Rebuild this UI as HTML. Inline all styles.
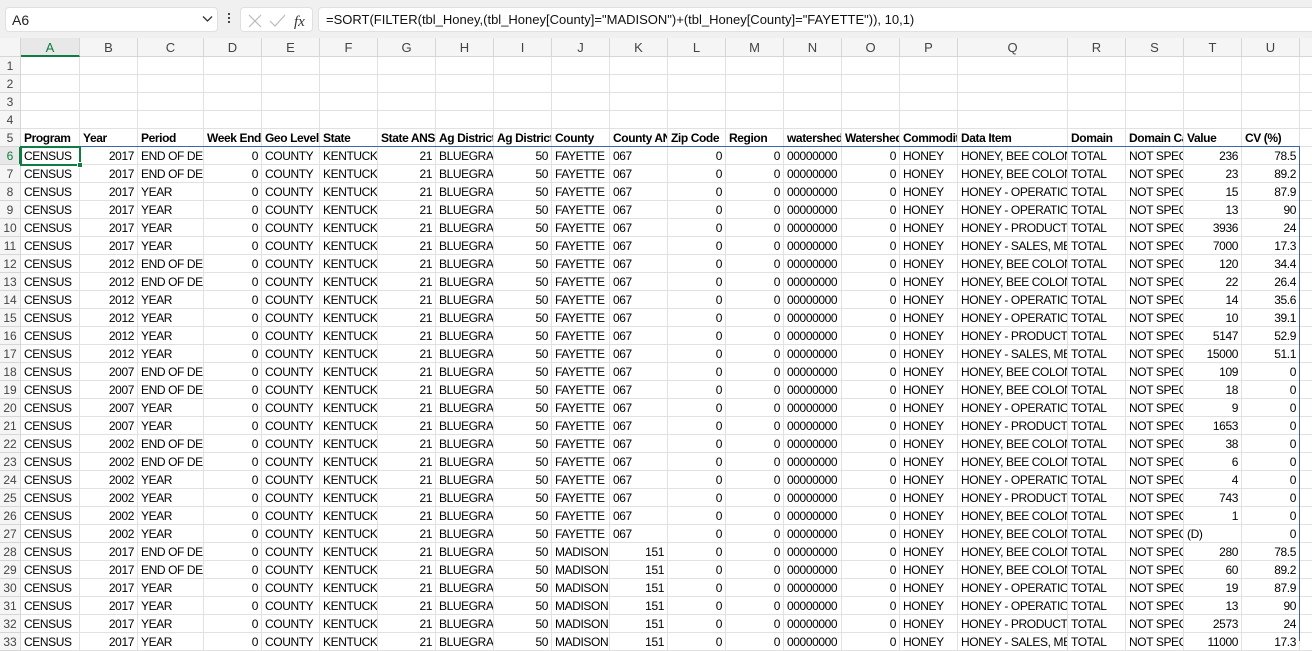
<!DOCTYPE html>
<html><head><meta charset="utf-8"><style>
*{box-sizing:border-box;margin:0;padding:0}
body{width:1312px;height:641px;overflow:hidden;background:#fff;font-family:"Liberation Sans",Arial,sans-serif;position:relative}
.top{position:absolute;left:0;top:0;width:1312px;height:38px;background:#f0f0f0}
.nb{position:absolute;left:5px;top:7px;width:213px;height:25px;background:#fff;border:1px solid #e0e0e0;border-radius:4px;font-size:14px;padding:4px 0 0 6px;color:#222}
.fb{position:absolute;left:240px;top:7px;width:73px;height:25px;background:#fff;border:1px solid #e0e0e0;border-radius:4px}
.fm{position:absolute;left:318px;top:7px;width:1000px;height:25px;background:#fff;border:1px solid #e0e0e0;border-radius:4px;font-size:13px;padding:4px 0 0 7px;color:#111;white-space:nowrap}
.g{position:absolute;left:0;top:38px;display:grid;grid-template-columns:21px 59px 58px 66px 58px 58px 58px 58px 58px 58px 58px 58px 58px 58px 58px 58px 58px 110px 58px 58px 58px 58px 20px;grid-template-rows:19px repeat(33,18px)}
.g>span{border-right:1px solid #e1e1e1;border-bottom:1px solid #e1e1e1;overflow:hidden;white-space:nowrap;font-size:12px;letter-spacing:-0.4px;line-height:19px;padding:0 3px;color:#000}
.g>span.r{text-align:right}
.g>span.c{background:#f5f5f5;border-color:#d6d6d6;text-align:center;color:#444;font-size:13px;line-height:19px;letter-spacing:0}
.g>span.h{background:#f5f5f5;border-color:#d6d6d6;text-align:center;color:#444;padding:0;letter-spacing:0}
.g>span.b{font-weight:bold}
</style></head><body>
<div class="top">
<div class="nb">A6</div>
<svg style="position:absolute;left:202px;top:15px" width="11" height="8"><path d="M1 1.5L5.5 6L10 1.5" fill="none" stroke="#333" stroke-width="1.3"/></svg>
<div style="position:absolute;left:228px;top:13px;width:2px;height:2px;background:#444;box-shadow:0 4px 0 #444,0 8px 0 #444"></div>
<div class="fb">
<svg style="position:absolute;left:6px;top:5px" width="60" height="16"><path d="M2 2L14 14M14 2L2 14" stroke="#bbb" stroke-width="1.2" fill="none"/><path d="M23 8L28 13L38 2" stroke="#bbb" stroke-width="1.2" fill="none"/><text x="47" y="13" font-family="Liberation Serif" font-style="italic" font-size="15" fill="#333">fx</text></svg>
</div>
<div class="fm">=SORT(FILTER(tbl_Honey,(tbl_Honey[County]="MADISON")+(tbl_Honey[County]="FAYETTE")), 10,1)</div>
</div>
<div class="g">
<span class="c" style="background:#f5f5f5"></span><span class="c" style="color:#107c41;border-bottom:2px solid #107c41;background:#e8e8e8">A</span><span class="c">B</span><span class="c">C</span><span class="c">D</span><span class="c">E</span><span class="c">F</span><span class="c">G</span><span class="c">H</span><span class="c">I</span><span class="c">J</span><span class="c">K</span><span class="c">L</span><span class="c">M</span><span class="c">N</span><span class="c">O</span><span class="c">P</span><span class="c">Q</span><span class="c">R</span><span class="c">S</span><span class="c">T</span><span class="c">U</span><span class="c"></span>
<span class="h">1</span><span></span><span></span><span></span><span></span><span></span><span></span><span></span><span></span><span></span><span></span><span></span><span></span><span></span><span></span><span></span><span></span><span></span><span></span><span></span><span></span><span></span><span></span>
<span class="h">2</span><span></span><span></span><span></span><span></span><span></span><span></span><span></span><span></span><span></span><span></span><span></span><span></span><span></span><span></span><span></span><span></span><span></span><span></span><span></span><span></span><span></span><span></span>
<span class="h">3</span><span></span><span></span><span></span><span></span><span></span><span></span><span></span><span></span><span></span><span></span><span></span><span></span><span></span><span></span><span></span><span></span><span></span><span></span><span></span><span></span><span></span><span></span>
<span class="h">4</span><span></span><span></span><span></span><span></span><span></span><span></span><span></span><span></span><span></span><span></span><span></span><span></span><span></span><span></span><span></span><span></span><span></span><span></span><span></span><span></span><span></span><span></span>
<span class="h">5</span><span class="b">Program</span><span class="b">Year</span><span class="b">Period</span><span class="b">Week Ending</span><span class="b">Geo Level</span><span class="b">State</span><span class="b">State ANSI</span><span class="b">Ag District</span><span class="b">Ag District Code</span><span class="b">County</span><span class="b">County ANSI</span><span class="b">Zip Code</span><span class="b">Region</span><span class="b">watershed_code</span><span class="b">Watershed</span><span class="b">Commodity</span><span class="b">Data Item</span><span class="b">Domain</span><span class="b">Domain Category</span><span class="b">Value</span><span class="b">CV (%)</span><span></span>
<span class="h" style="color:#107c41;background:#e8e8e8">6</span><span>CENSUS</span><span class="r">2017</span><span>END OF DECEMBER</span><span class="r">0</span><span>COUNTY</span><span>KENTUCKY</span><span class="r">21</span><span>BLUEGRASS</span><span class="r">50</span><span>FAYETTE</span><span>067</span><span class="r">0</span><span class="r">0</span><span>00000000</span><span class="r">0</span><span>HONEY</span><span>HONEY, BEE COLONIES</span><span>TOTAL</span><span>NOT SPECIFIED</span><span class="r">236</span><span class="r">78.5</span><span></span>
<span class="h">7</span><span>CENSUS</span><span class="r">2017</span><span>END OF DECEMBER</span><span class="r">0</span><span>COUNTY</span><span>KENTUCKY</span><span class="r">21</span><span>BLUEGRASS</span><span class="r">50</span><span>FAYETTE</span><span>067</span><span class="r">0</span><span class="r">0</span><span>00000000</span><span class="r">0</span><span>HONEY</span><span>HONEY, BEE COLONIES</span><span>TOTAL</span><span>NOT SPECIFIED</span><span class="r">23</span><span class="r">89.2</span><span></span>
<span class="h">8</span><span>CENSUS</span><span class="r">2017</span><span>YEAR</span><span class="r">0</span><span>COUNTY</span><span>KENTUCKY</span><span class="r">21</span><span>BLUEGRASS</span><span class="r">50</span><span>FAYETTE</span><span>067</span><span class="r">0</span><span class="r">0</span><span>00000000</span><span class="r">0</span><span>HONEY</span><span>HONEY - OPERATIONS</span><span>TOTAL</span><span>NOT SPECIFIED</span><span class="r">15</span><span class="r">87.9</span><span></span>
<span class="h">9</span><span>CENSUS</span><span class="r">2017</span><span>YEAR</span><span class="r">0</span><span>COUNTY</span><span>KENTUCKY</span><span class="r">21</span><span>BLUEGRASS</span><span class="r">50</span><span>FAYETTE</span><span>067</span><span class="r">0</span><span class="r">0</span><span>00000000</span><span class="r">0</span><span>HONEY</span><span>HONEY - OPERATIONS</span><span>TOTAL</span><span>NOT SPECIFIED</span><span class="r">13</span><span class="r">90</span><span></span>
<span class="h">10</span><span>CENSUS</span><span class="r">2017</span><span>YEAR</span><span class="r">0</span><span>COUNTY</span><span>KENTUCKY</span><span class="r">21</span><span>BLUEGRASS</span><span class="r">50</span><span>FAYETTE</span><span>067</span><span class="r">0</span><span class="r">0</span><span>00000000</span><span class="r">0</span><span>HONEY</span><span>HONEY - PRODUCTION</span><span>TOTAL</span><span>NOT SPECIFIED</span><span class="r">3936</span><span class="r">24</span><span></span>
<span class="h">11</span><span>CENSUS</span><span class="r">2017</span><span>YEAR</span><span class="r">0</span><span>COUNTY</span><span>KENTUCKY</span><span class="r">21</span><span>BLUEGRASS</span><span class="r">50</span><span>FAYETTE</span><span>067</span><span class="r">0</span><span class="r">0</span><span>00000000</span><span class="r">0</span><span>HONEY</span><span>HONEY - SALES, MEASURED</span><span>TOTAL</span><span>NOT SPECIFIED</span><span class="r">7000</span><span class="r">17.3</span><span></span>
<span class="h">12</span><span>CENSUS</span><span class="r">2012</span><span>END OF DECEMBER</span><span class="r">0</span><span>COUNTY</span><span>KENTUCKY</span><span class="r">21</span><span>BLUEGRASS</span><span class="r">50</span><span>FAYETTE</span><span>067</span><span class="r">0</span><span class="r">0</span><span>00000000</span><span class="r">0</span><span>HONEY</span><span>HONEY, BEE COLONIES</span><span>TOTAL</span><span>NOT SPECIFIED</span><span class="r">120</span><span class="r">34.4</span><span></span>
<span class="h">13</span><span>CENSUS</span><span class="r">2012</span><span>END OF DECEMBER</span><span class="r">0</span><span>COUNTY</span><span>KENTUCKY</span><span class="r">21</span><span>BLUEGRASS</span><span class="r">50</span><span>FAYETTE</span><span>067</span><span class="r">0</span><span class="r">0</span><span>00000000</span><span class="r">0</span><span>HONEY</span><span>HONEY, BEE COLONIES</span><span>TOTAL</span><span>NOT SPECIFIED</span><span class="r">22</span><span class="r">26.4</span><span></span>
<span class="h">14</span><span>CENSUS</span><span class="r">2012</span><span>YEAR</span><span class="r">0</span><span>COUNTY</span><span>KENTUCKY</span><span class="r">21</span><span>BLUEGRASS</span><span class="r">50</span><span>FAYETTE</span><span>067</span><span class="r">0</span><span class="r">0</span><span>00000000</span><span class="r">0</span><span>HONEY</span><span>HONEY - OPERATIONS</span><span>TOTAL</span><span>NOT SPECIFIED</span><span class="r">14</span><span class="r">35.6</span><span></span>
<span class="h">15</span><span>CENSUS</span><span class="r">2012</span><span>YEAR</span><span class="r">0</span><span>COUNTY</span><span>KENTUCKY</span><span class="r">21</span><span>BLUEGRASS</span><span class="r">50</span><span>FAYETTE</span><span>067</span><span class="r">0</span><span class="r">0</span><span>00000000</span><span class="r">0</span><span>HONEY</span><span>HONEY - OPERATIONS</span><span>TOTAL</span><span>NOT SPECIFIED</span><span class="r">10</span><span class="r">39.1</span><span></span>
<span class="h">16</span><span>CENSUS</span><span class="r">2012</span><span>YEAR</span><span class="r">0</span><span>COUNTY</span><span>KENTUCKY</span><span class="r">21</span><span>BLUEGRASS</span><span class="r">50</span><span>FAYETTE</span><span>067</span><span class="r">0</span><span class="r">0</span><span>00000000</span><span class="r">0</span><span>HONEY</span><span>HONEY - PRODUCTION</span><span>TOTAL</span><span>NOT SPECIFIED</span><span class="r">5147</span><span class="r">52.9</span><span></span>
<span class="h">17</span><span>CENSUS</span><span class="r">2012</span><span>YEAR</span><span class="r">0</span><span>COUNTY</span><span>KENTUCKY</span><span class="r">21</span><span>BLUEGRASS</span><span class="r">50</span><span>FAYETTE</span><span>067</span><span class="r">0</span><span class="r">0</span><span>00000000</span><span class="r">0</span><span>HONEY</span><span>HONEY - SALES, MEASURED</span><span>TOTAL</span><span>NOT SPECIFIED</span><span class="r">15000</span><span class="r">51.1</span><span></span>
<span class="h">18</span><span>CENSUS</span><span class="r">2007</span><span>END OF DECEMBER</span><span class="r">0</span><span>COUNTY</span><span>KENTUCKY</span><span class="r">21</span><span>BLUEGRASS</span><span class="r">50</span><span>FAYETTE</span><span>067</span><span class="r">0</span><span class="r">0</span><span>00000000</span><span class="r">0</span><span>HONEY</span><span>HONEY, BEE COLONIES</span><span>TOTAL</span><span>NOT SPECIFIED</span><span class="r">109</span><span class="r">0</span><span></span>
<span class="h">19</span><span>CENSUS</span><span class="r">2007</span><span>END OF DECEMBER</span><span class="r">0</span><span>COUNTY</span><span>KENTUCKY</span><span class="r">21</span><span>BLUEGRASS</span><span class="r">50</span><span>FAYETTE</span><span>067</span><span class="r">0</span><span class="r">0</span><span>00000000</span><span class="r">0</span><span>HONEY</span><span>HONEY, BEE COLONIES</span><span>TOTAL</span><span>NOT SPECIFIED</span><span class="r">18</span><span class="r">0</span><span></span>
<span class="h">20</span><span>CENSUS</span><span class="r">2007</span><span>YEAR</span><span class="r">0</span><span>COUNTY</span><span>KENTUCKY</span><span class="r">21</span><span>BLUEGRASS</span><span class="r">50</span><span>FAYETTE</span><span>067</span><span class="r">0</span><span class="r">0</span><span>00000000</span><span class="r">0</span><span>HONEY</span><span>HONEY - OPERATIONS</span><span>TOTAL</span><span>NOT SPECIFIED</span><span class="r">9</span><span class="r">0</span><span></span>
<span class="h">21</span><span>CENSUS</span><span class="r">2007</span><span>YEAR</span><span class="r">0</span><span>COUNTY</span><span>KENTUCKY</span><span class="r">21</span><span>BLUEGRASS</span><span class="r">50</span><span>FAYETTE</span><span>067</span><span class="r">0</span><span class="r">0</span><span>00000000</span><span class="r">0</span><span>HONEY</span><span>HONEY - PRODUCTION</span><span>TOTAL</span><span>NOT SPECIFIED</span><span class="r">1653</span><span class="r">0</span><span></span>
<span class="h">22</span><span>CENSUS</span><span class="r">2002</span><span>END OF DECEMBER</span><span class="r">0</span><span>COUNTY</span><span>KENTUCKY</span><span class="r">21</span><span>BLUEGRASS</span><span class="r">50</span><span>FAYETTE</span><span>067</span><span class="r">0</span><span class="r">0</span><span>00000000</span><span class="r">0</span><span>HONEY</span><span>HONEY, BEE COLONIES</span><span>TOTAL</span><span>NOT SPECIFIED</span><span class="r">38</span><span class="r">0</span><span></span>
<span class="h">23</span><span>CENSUS</span><span class="r">2002</span><span>END OF DECEMBER</span><span class="r">0</span><span>COUNTY</span><span>KENTUCKY</span><span class="r">21</span><span>BLUEGRASS</span><span class="r">50</span><span>FAYETTE</span><span>067</span><span class="r">0</span><span class="r">0</span><span>00000000</span><span class="r">0</span><span>HONEY</span><span>HONEY, BEE COLONIES</span><span>TOTAL</span><span>NOT SPECIFIED</span><span class="r">6</span><span class="r">0</span><span></span>
<span class="h">24</span><span>CENSUS</span><span class="r">2002</span><span>YEAR</span><span class="r">0</span><span>COUNTY</span><span>KENTUCKY</span><span class="r">21</span><span>BLUEGRASS</span><span class="r">50</span><span>FAYETTE</span><span>067</span><span class="r">0</span><span class="r">0</span><span>00000000</span><span class="r">0</span><span>HONEY</span><span>HONEY - OPERATIONS</span><span>TOTAL</span><span>NOT SPECIFIED</span><span class="r">4</span><span class="r">0</span><span></span>
<span class="h">25</span><span>CENSUS</span><span class="r">2002</span><span>YEAR</span><span class="r">0</span><span>COUNTY</span><span>KENTUCKY</span><span class="r">21</span><span>BLUEGRASS</span><span class="r">50</span><span>FAYETTE</span><span>067</span><span class="r">0</span><span class="r">0</span><span>00000000</span><span class="r">0</span><span>HONEY</span><span>HONEY - PRODUCTION</span><span>TOTAL</span><span>NOT SPECIFIED</span><span class="r">743</span><span class="r">0</span><span></span>
<span class="h">26</span><span>CENSUS</span><span class="r">2002</span><span>YEAR</span><span class="r">0</span><span>COUNTY</span><span>KENTUCKY</span><span class="r">21</span><span>BLUEGRASS</span><span class="r">50</span><span>FAYETTE</span><span>067</span><span class="r">0</span><span class="r">0</span><span>00000000</span><span class="r">0</span><span>HONEY</span><span>HONEY, BEE COLONIES</span><span>TOTAL</span><span>NOT SPECIFIED</span><span class="r">1</span><span class="r">0</span><span></span>
<span class="h">27</span><span>CENSUS</span><span class="r">2002</span><span>YEAR</span><span class="r">0</span><span>COUNTY</span><span>KENTUCKY</span><span class="r">21</span><span>BLUEGRASS</span><span class="r">50</span><span>FAYETTE</span><span>067</span><span class="r">0</span><span class="r">0</span><span>00000000</span><span class="r">0</span><span>HONEY</span><span>HONEY, BEE COLONIES</span><span>TOTAL</span><span>NOT SPECIFIED</span><span>(D)</span><span class="r">0</span><span></span>
<span class="h">28</span><span>CENSUS</span><span class="r">2017</span><span>END OF DECEMBER</span><span class="r">0</span><span>COUNTY</span><span>KENTUCKY</span><span class="r">21</span><span>BLUEGRASS</span><span class="r">50</span><span>MADISON</span><span class="r">151</span><span class="r">0</span><span class="r">0</span><span>00000000</span><span class="r">0</span><span>HONEY</span><span>HONEY, BEE COLONIES</span><span>TOTAL</span><span>NOT SPECIFIED</span><span class="r">280</span><span class="r">78.5</span><span></span>
<span class="h">29</span><span>CENSUS</span><span class="r">2017</span><span>END OF DECEMBER</span><span class="r">0</span><span>COUNTY</span><span>KENTUCKY</span><span class="r">21</span><span>BLUEGRASS</span><span class="r">50</span><span>MADISON</span><span class="r">151</span><span class="r">0</span><span class="r">0</span><span>00000000</span><span class="r">0</span><span>HONEY</span><span>HONEY, BEE COLONIES</span><span>TOTAL</span><span>NOT SPECIFIED</span><span class="r">60</span><span class="r">89.2</span><span></span>
<span class="h">30</span><span>CENSUS</span><span class="r">2017</span><span>YEAR</span><span class="r">0</span><span>COUNTY</span><span>KENTUCKY</span><span class="r">21</span><span>BLUEGRASS</span><span class="r">50</span><span>MADISON</span><span class="r">151</span><span class="r">0</span><span class="r">0</span><span>00000000</span><span class="r">0</span><span>HONEY</span><span>HONEY - OPERATIONS</span><span>TOTAL</span><span>NOT SPECIFIED</span><span class="r">19</span><span class="r">87.9</span><span></span>
<span class="h">31</span><span>CENSUS</span><span class="r">2017</span><span>YEAR</span><span class="r">0</span><span>COUNTY</span><span>KENTUCKY</span><span class="r">21</span><span>BLUEGRASS</span><span class="r">50</span><span>MADISON</span><span class="r">151</span><span class="r">0</span><span class="r">0</span><span>00000000</span><span class="r">0</span><span>HONEY</span><span>HONEY - OPERATIONS</span><span>TOTAL</span><span>NOT SPECIFIED</span><span class="r">13</span><span class="r">90</span><span></span>
<span class="h">32</span><span>CENSUS</span><span class="r">2017</span><span>YEAR</span><span class="r">0</span><span>COUNTY</span><span>KENTUCKY</span><span class="r">21</span><span>BLUEGRASS</span><span class="r">50</span><span>MADISON</span><span class="r">151</span><span class="r">0</span><span class="r">0</span><span>00000000</span><span class="r">0</span><span>HONEY</span><span>HONEY - PRODUCTION</span><span>TOTAL</span><span>NOT SPECIFIED</span><span class="r">2573</span><span class="r">24</span><span></span>
<span class="h">33</span><span>CENSUS</span><span class="r">2017</span><span>YEAR</span><span class="r">0</span><span>COUNTY</span><span>KENTUCKY</span><span class="r">21</span><span>BLUEGRASS</span><span class="r">50</span><span>MADISON</span><span class="r">151</span><span class="r">0</span><span class="r">0</span><span>00000000</span><span class="r">0</span><span>HONEY</span><span>HONEY - SALES, MEASURED</span><span>TOTAL</span><span>NOT SPECIFIED</span><span class="r">11000</span><span class="r">17.3</span><span></span>
</div>
<div style="position:absolute;left:21px;top:146px;width:1279px;height:1px;background:#3a66b0"></div>
<div style="position:absolute;left:1299px;top:146px;width:1px;height:495px;background:#3a66b0"></div>
<div style="position:absolute;left:20px;top:146px;width:61px;height:20px;border:2px solid #107c41"></div>
<div style="position:absolute;left:77px;top:162px;width:6px;height:6px;background:#107c41;border:1px solid #fff"></div>
<div style="position:absolute;left:19px;top:147px;width:2px;height:17px;background:#107c41"></div>
</body></html>
